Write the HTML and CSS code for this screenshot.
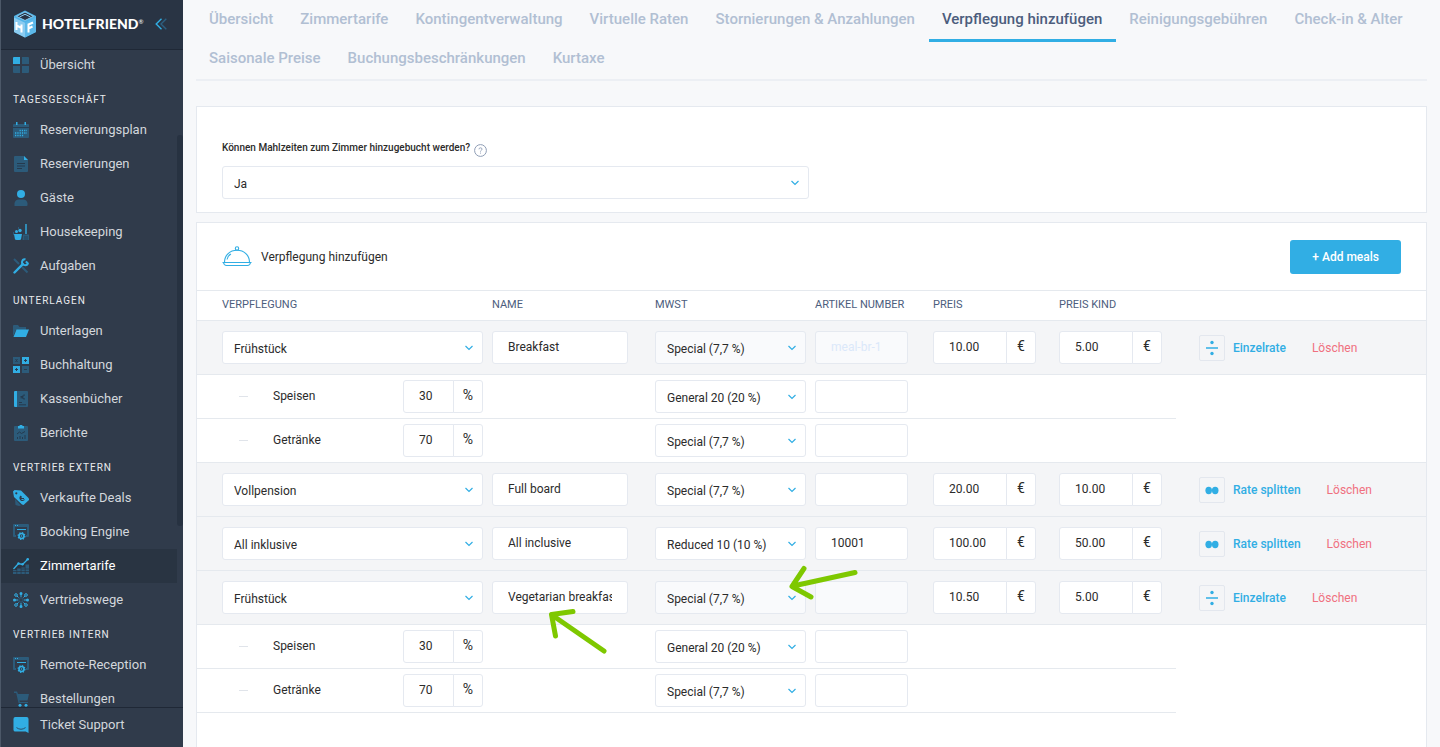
FILE: index.html
```html
<!DOCTYPE html>
<html lang="de">
<head>
<meta charset="utf-8">
<meta name="viewport" content="width=device-width, initial-scale=1">
<title>HotelFriend – Verpflegung hinzufügen</title>
<link rel="stylesheet" href="styles.css">
</head>
<body>
<svg class="sprite" aria-hidden="true">
  <symbol id="chevron" viewBox="0 0 10 6"><path d="M1.5 1l3.5 3.5L8.500 1" fill="none" stroke="currentColor" stroke-width="1.200"/></symbol>
  <symbol id="divide" viewBox="0 0 14 16"><path d="M1 8h12" stroke="currentColor" stroke-width="1.500"/><circle cx="7" cy="2.500" r="1.700" fill="currentColor"/><circle cx="7" cy="13.500" r="1.700" fill="currentColor"/></symbol>
  <symbol id="merge" viewBox="0 0 14 16"><ellipse cx="3.700" cy="8.500" rx="3.300" ry="3.700" fill="currentColor"/><ellipse cx="10.200" cy="8.500" rx="3.300" ry="3.700" fill="currentColor"/></symbol>
  <symbol id="browser" viewBox="0 0 16 16">
    <path class="dim" d="M0 1a1 1 0 0 1 1-1h14a1 1 0 0 1 1 1v11a1 1 0 0 1-1 1h-2v-2h1V3H2v8h1v2H1a1 1 0 0 1-1-1z"/>
    <path class="lit" d="M2 1h1v1H2zM4 1h1v1H4zM4 5h9v1H4z"/>
    <circle cx="8.500" cy="12" r="2.500" fill="none" stroke="#31aee4" stroke-width="1.600"/><circle cx="8.500" cy="12" r="3.400" fill="none" stroke="#31aee4" stroke-width="1.200" stroke-dasharray="1.300 1.370"/><circle class="lit" cx="8.500" cy="12" r=".8"/>
  </symbol>
</svg>

<div class="app">
  <aside class="sidebar">
    <header class="brand">
      <svg class="brand-cube" width="24" height="28" viewBox="0 0 24 28" aria-hidden="true">
        <path fill="#4fb3e8" d="M12 .5L23 6v16l-11 5.500L1 22V6z"/>
        <path fill="#8acbf0" d="M1 7.500l11 5.200v14.800L1 22z"/>
        <path fill="#5cb8e9" d="M23 7.500l-11 5.200v14.800L23 22z"/>
        <path fill="#293444" stroke="#8acbf0" d="M12 2l8.500 4.300L12 10.500 3.500 6.300z"/>
        <path fill="none" stroke="#8acbf0" d="M6.500 7L12 4.300 17.500 7"/>
        <path fill="none" stroke="#fff" stroke-width="2" d="M3.500 12v8M8.500 14.500v8M3.500 15.500l5 2.500M15.500 22.500v-8l4.500-2M15.500 18.500l4-2"/>
      </svg>
      <span class="brand-name">HOTELFRIEND<sup>®</sup></span>
      <button class="collapse" type="button" aria-label="Menü einklappen">
        <svg width="12" height="12" viewBox="0 0 12 12" fill="none" stroke-width="1.400"><path stroke="#31aee4" d="M6.500 .8L1.200 6l5.300 5.200"/><path stroke="#2c5f80" d="M11.300 .8L6 6l5.300 5.200"/></svg>
      </button>
    </header>

    <nav class="menu" aria-label="Hauptmenü">
      <ul>
        <li><a href="#"><svg class="ico" viewBox="0 0 16 16"><path class="lit" d="M0 1a1 1 0 0 1 1-1h6v7H0z"/><path class="dim" d="M9 0h6a1 1 0 0 1 1 1v6H9zM0 9h7v7H1a1 1 0 0 1-1-1zM9 9h7v6a1 1 0 0 1-1 1H9z"/></svg>Übersicht</a></li>
      </ul>
      <h2>TAGESGESCHÄFT</h2>
      <ul>
        <li><a href="#"><svg class="ico" viewBox="0 0 16 16"><path class="dim" d="M1 2h14a1 1 0 0 1 1 1v12a1 1 0 0 1-1 1H1a1 1 0 0 1-1-1V3a1 1 0 0 1 1-1z"/><path stroke="#293d52" d="M0 5.500h16"/><path class="lit" d="M3 0h1.500v3H3zM11.500 0H13v3h-1.500z"/><path stroke="#31aee4" stroke-width="1.300" stroke-dasharray="1.300 1" d="M6.500 8.500H14M2 11h12M2 13.500h9"/></svg>Reservierungsplan</a></li>
        <li><a href="#"><svg class="ico" viewBox="0 0 16 16"><path class="dim" d="M2 0h9l4 4v11a1 1 0 0 1-1 1H2a1 1 0 0 1-1-1V1a1 1 0 0 1 1-1z"/><path class="lit" d="M11 0v4h4z"/><path stroke="#253a4e" d="M4 7.500h8M4 10h8M4 12.500h5"/></svg>Reservierungen</a></li>
        <li><a href="#"><svg class="ico" viewBox="0 0 16 16"><circle class="lit" cx="8" cy="4" r="4"/><path class="dim" d="M1.500 16v-2.500Q2 9.500 6 9.500h4q4 0 4.500 4V15a1 1 0 0 1-1 1z"/></svg>Gäste</a></li>
        <li><a href="#"><svg class="ico" viewBox="0 0 16 16"><path class="lit" d="M1 10h8l-1 5.500Q5 16.500 2 15.500zM12.300 0h1.400v10h-1.400z"/><circle class="lit" cx="7" cy="6.500" r="1.700"/><circle class="lit" cx="3.500" cy="7.500" r="1.500"/><path class="dim" d="M10 10.500h6V16H9.500zM0 8h1v3H0zM5 3h1v2H5z"/><path stroke="#253a4e" stroke-width=".7" d="M12 12v4M14 12v4"/></svg>Housekeeping</a></li>
        <li><a href="#"><svg class="ico" viewBox="0 0 16 16"><path fill="none" stroke="#2c5b7a" stroke-width="2" d="M1 1l5 5M9 9l5.500 5.500"/><path fill="none" stroke="#31aee4" stroke-width="2.400" stroke-linecap="round" d="M1.500 14.500l8.300-8.300"/><path fill="none" stroke="#31aee4" stroke-width="2" d="M12.500 1.200a3 3 0 1 0 2.500 3.500M12.800 3.400L15 5.200"/></svg>Aufgaben</a></li>
      </ul>
      <h2>UNTERLAGEN</h2>
      <ul>
        <li><a href="#"><svg class="ico" viewBox="0 0 16 16"><path class="dim" d="M0 3a1 1 0 0 1 1-1h4l1.500 2H13v3H3L0 13z"/><path class="lit" d="M3.500 6.500H16L13 14H.5z"/></svg>Unterlagen</a></li>
        <li><a href="#"><svg class="ico" viewBox="0 0 16 16"><path class="dim" d="M0 0h7v7H0zM9 9h7v7H9z"/><path class="lit" d="M9 0h7v7H9zM0 9h7v7H0z"/><path stroke="#293d52" d="M2.500 2l2 3M4.500 2l-2 3M11 3.500h3M12.500 2v3M2 12.500h3M3.500 11v3M11 12.500h3"/></svg>Buchhaltung</a></li>
        <li><a href="#"><svg class="ico" viewBox="0 0 16 16"><path class="dim" d="M4 0h10a1 1 0 0 1 1 1v14a1 1 0 0 1-1 1H4z"/><path class="lit" d="M2 0h2v16H2a1 1 0 0 1-1-1V1a1 1 0 0 1 1-1z"/><path fill="none" stroke="#253a4e" d="M12 4.200a2 2 0 1 0 0 3.600M7.500 5.500h3M7.500 6.800h3M6 11.500h3M6 13.800h7"/></svg>Kassenbücher</a></li>
        <li><a href="#"><svg class="ico" viewBox="0 0 16 16"><path class="dim" d="M2 1h12a1 1 0 0 1 1 1v13a1 1 0 0 1-1 1H2a1 1 0 0 1-1-1V2a1 1 0 0 1 1-1z"/><path class="lit" d="M5 1h1.500a1.500 1.500 0 0 1 3 0H11v2.500H5z"/><path fill="none" stroke="#253a4e" d="M4 9l2.500-2 2 1.500L12 6.500M4.500 14v-2M7 14v-3M9.500 14v-2M12 14v-4"/></svg>Berichte</a></li>
      </ul>
      <h2>VERTRIEB EXTERN</h2>
      <ul>
        <li><a href="#"><svg class="ico" viewBox="0 0 16 16"><path class="dim" d="M2 9l6 6.500-2 .5-3.500-1z"/><path class="lit" d="M0 1.500L1.500 0 8 .5l8 8v1.500L10.500 15 9 14.500 1 7z"/><circle cx="3.300" cy="3.300" r="1.100" fill="#303b4b"/><path fill="none" stroke="#303b4b" stroke-width="1.200" d="M8 6a2.500 2.500 0 1 0 3.500 3.500M8 6v2.500h3"/></svg>Verkaufte Deals</a></li>
        <li><a href="#"><svg class="ico"><use href="#browser"/></svg>Booking Engine</a></li>
        <li><a class="active" href="#" aria-current="page"><svg class="ico" viewBox="0 0 16 16"><path class="dim" d="M0 12h3.500v4H0zM4.200 10.500h3.500V16H4.200zM8.400 9.500h3.400V16H8.400zM12.500 6.500H16V16h-3.500z"/><path stroke="#293442" stroke-width=".7" d="M0 13.500h16M8.400 11h8"/><path fill="none" stroke="#31aee4" stroke-width="1.300" d="M.5 11L5.500 5.500l4 1L15 1"/><circle class="lit" cx="5.500" cy="5.500" r="1.200"/><circle class="lit" cx="9.500" cy="6.300" r="1.200"/><circle class="lit" cx="14.700" cy="1.300" r="1.300"/></svg>Zimmertarife</a></li>
        <li><a href="#"><svg class="ico" viewBox="0 0 16 16"><circle cx="8" cy="8" r="2.200" fill="none" stroke="#2c5b7a"/><path stroke="#31aee4" d="M8 1v4M8 11v4M1 8h4M11 8h4M4 4l1.500 1.500M12 4l-1.500 1.500M4 12l1.500-1.500M12 12l-1.500-1.500"/><path class="lit" d="M6.500 1.500a1.500 1.500 0 1 1 3 0a1.500 1.500 0 1 1-3 0M6.500 14.500a1.500 1.500 0 1 1 3 0a1.500 1.500 0 1 1-3 0M0 8a1.500 1.500 0 1 1 3 0a1.500 1.500 0 1 1-3 0M13 8a1.500 1.500 0 1 1 3 0a1.500 1.500 0 1 1-3 0"/><g fill="none" stroke="#31aee4"><circle cx="3" cy="3" r="1.300"/><circle cx="13" cy="3" r="1.300"/><circle cx="3" cy="13" r="1.300"/><circle cx="13" cy="13" r="1.300"/></g></svg>Vertriebswege</a></li>
      </ul>
      <h2>VERTRIEB INTERN</h2>
      <ul>
        <li><a href="#"><svg class="ico"><use href="#browser"/></svg>Remote-Reception</a></li>
        <li><a href="#"><svg class="ico" viewBox="0 0 16 16"><path class="dim" d="M1 .5h3L5 3h11l-1.500 6.500h-8l.3 1.500H15v1H5.500L3.200 2H1z"/><circle class="lit" cx="7" cy="14.300" r="1.500"/><circle class="lit" cx="13" cy="14.300" r="1.500"/></svg>Bestellungen</a></li>
      </ul>
      <span class="thumb"></span>
    </nav>

    <footer class="support">
      <a href="#"><svg class="ico" viewBox="0 0 16 17"><path class="lit" d="M2 0h12a2 2 0 0 1 2 2v15l-3-1.500H2a2 2 0 0 1-2-2V2a2 2 0 0 1 2-2z"/><path fill="none" stroke="#2b4a63" stroke-linecap="round" d="M3.500 11.500q4.500 3.300 9 0"/></svg>Ticket Support</a>
    </footer>
  </aside>

  <main class="main">
    <nav class="tabs" aria-label="Einstellungen">
      <a href="#">Übersicht</a>
      <a href="#">Zimmertarife</a>
      <a href="#">Kontingentverwaltung</a>
      <a href="#">Virtuelle Raten</a>
      <a href="#">Stornierungen &amp; Anzahlungen</a>
      <a class="current" href="#" aria-current="page">Verpflegung hinzufügen</a>
      <a href="#">Reinigungsgebühren</a>
      <a href="#">Check-in &amp; Alter</a>
      <a href="#">Saisonale Preise</a>
      <a href="#">Buchungsbeschränkungen</a>
      <a href="#">Kurtaxe</a>
    </nav>

    <section class="card question">
      <div class="question-label">
        <label for="bookable">Können Mahlzeiten zum Zimmer hinzugebucht werden?</label>
        <svg class="help" width="13" height="13" viewBox="0 0 13 13" fill="none" stroke="#8e9db5" aria-hidden="true"><circle cx="6.500" cy="6.500" r="5.900"/><path stroke-width=".9" d="M5 5.300q0-1.500 1.500-1.500T8 5.200q0 .8-.8 1.200-.7.300-.7 1.200M6.500 8.600v1"/></svg>
      </div>
      <div class="select wide"><select id="bookable"><option>Ja</option><option>Nein</option></select><svg><use href="#chevron"/></svg></div>
    </section>

    <section class="card meals">
      <header class="meals-head">
        <svg width="30" height="21" viewBox="0 0 30 21" fill="none" stroke="#31aee4" stroke-width="1.100" aria-hidden="true"><path d="M2.500 16.500C2.500 9 8 4.300 15 4.300S27.500 9 27.500 16.500M.5 16.500h29M1.500 16.500q.5 3 3 3h21q2.500 0 3-3M5 13.500q.7-4 4-5.500"/><circle cx="15" cy="2.500" r="1.700"/></svg>
        <h1>Verpflegung hinzufügen</h1>
        <button class="add" type="button">+ Add meals</button>
      </header>

      <table>
        <colgroup><col class="c-meal"><col class="c-name"><col class="c-tax"><col class="c-article"><col class="c-price"><col class="c-child"><col></colgroup>
        <thead>
          <tr><th>VERPFLEGUNG</th><th>NAME</th><th>MWST</th><th>ARTIKEL NUMBER</th><th>PREIS</th><th>PREIS KIND</th><th></th></tr>
        </thead>
        <tbody>
          <tr class="meal">
            <td><div class="select"><select aria-label="Verpflegung"><option>Frühstück</option></select><svg><use href="#chevron"/></svg></div></td>
            <td><input aria-label="Name" value="Breakfast"></td>
            <td><div class="select"><select aria-label="MwSt" disabled><option>Special (7,7 %)</option></select><svg><use href="#chevron"/></svg></div></td>
            <td><input aria-label="Artikel Number" value="meal-br-1" disabled></td>
            <td><div class="amount"><input aria-label="Preis" value="10.00"><span>€</span></div></td>
            <td><div class="amount"><input aria-label="Preis Kind" value="5.00"><span>€</span></div></td>
            <td><div class="actions"><button class="rate" type="button"><svg><use href="#divide"/></svg>Einzelrate</button><button class="delete" type="button">Löschen</button></div></td>
          </tr>
          <tr class="part">
            <td><div class="share"><i></i><label for="s1">Speisen</label><div class="amount"><input id="s1" value="30"><span>%</span></div></div></td>
            <td></td>
            <td><div class="select"><select aria-label="MwSt"><option>General 20 (20 %)</option></select><svg><use href="#chevron"/></svg></div></td>
            <td><input aria-label="Artikel Number"></td><td></td><td></td><td></td>
          </tr>
          <tr class="part">
            <td><div class="share"><i></i><label for="s2">Getränke</label><div class="amount"><input id="s2" value="70"><span>%</span></div></div></td>
            <td></td>
            <td><div class="select"><select aria-label="MwSt"><option>Special (7,7 %)</option></select><svg><use href="#chevron"/></svg></div></td>
            <td><input aria-label="Artikel Number"></td><td></td><td></td><td class="close"></td>
          </tr>
          <tr class="meal">
            <td><div class="select"><select aria-label="Verpflegung"><option>Vollpension</option></select><svg><use href="#chevron"/></svg></div></td>
            <td><input aria-label="Name" value="Full board"></td>
            <td><div class="select"><select aria-label="MwSt"><option>Special (7,7 %)</option></select><svg><use href="#chevron"/></svg></div></td>
            <td><input aria-label="Artikel Number"></td>
            <td><div class="amount"><input aria-label="Preis" value="20.00"><span>€</span></div></td>
            <td><div class="amount"><input aria-label="Preis Kind" value="10.00"><span>€</span></div></td>
            <td><div class="actions"><button class="rate" type="button"><svg><use href="#merge"/></svg>Rate splitten</button><button class="delete" type="button">Löschen</button></div></td>
          </tr>
          <tr class="meal">
            <td><div class="select"><select aria-label="Verpflegung"><option>All inklusive</option></select><svg><use href="#chevron"/></svg></div></td>
            <td><input aria-label="Name" value="All inclusive"></td>
            <td><div class="select"><select aria-label="MwSt"><option>Reduced 10 (10 %)</option></select><svg><use href="#chevron"/></svg></div></td>
            <td><input aria-label="Artikel Number" value="10001"></td>
            <td><div class="amount"><input aria-label="Preis" value="100.00"><span>€</span></div></td>
            <td><div class="amount"><input aria-label="Preis Kind" value="50.00"><span>€</span></div></td>
            <td><div class="actions"><button class="rate" type="button"><svg><use href="#merge"/></svg>Rate splitten</button><button class="delete" type="button">Löschen</button></div></td>
          </tr>
          <tr class="meal">
            <td><div class="select"><select aria-label="Verpflegung"><option>Frühstück</option></select><svg><use href="#chevron"/></svg></div></td>
            <td><input aria-label="Name" value="Vegetarian breakfast"></td>
            <td><div class="select"><select aria-label="MwSt" disabled><option>Special (7,7 %)</option></select><svg><use href="#chevron"/></svg></div></td>
            <td><input aria-label="Artikel Number" disabled></td>
            <td><div class="amount"><input aria-label="Preis" value="10.50"><span>€</span></div></td>
            <td><div class="amount"><input aria-label="Preis Kind" value="5.00"><span>€</span></div></td>
            <td><div class="actions"><button class="rate" type="button"><svg><use href="#divide"/></svg>Einzelrate</button><button class="delete" type="button">Löschen</button></div></td>
          </tr>
          <tr class="part">
            <td><div class="share"><i></i><label for="s3">Speisen</label><div class="amount"><input id="s3" value="30"><span>%</span></div></div></td>
            <td></td>
            <td><div class="select"><select aria-label="MwSt"><option>General 20 (20 %)</option></select><svg><use href="#chevron"/></svg></div></td>
            <td><input aria-label="Artikel Number"></td><td></td><td></td><td></td>
          </tr>
          <tr class="part">
            <td><div class="share"><i></i><label for="s4">Getränke</label><div class="amount"><input id="s4" value="70"><span>%</span></div></div></td>
            <td></td>
            <td><div class="select"><select aria-label="MwSt"><option>Special (7,7 %)</option></select><svg><use href="#chevron"/></svg></div></td>
            <td><input aria-label="Artikel Number"></td><td></td><td></td><td></td>
          </tr>
        </tbody>
      </table>

      <svg class="marks" width="320" height="100" viewBox="545 560 320 100" fill="none" stroke="#7ec800" stroke-width="5" stroke-linecap="round" stroke-linejoin="round" aria-hidden="true">
        <path d="M855 572.500L793 586M804 568.500L792 586.500 811 597"/>
        <path d="M604 651L552 615M573 611.500L551.500 614.500 555.500 636"/>
      </svg>
    </section>
  </main>
</div>
</body>
</html>
```

FILE: styles.css
```css
*, *::before, *::after { box-sizing: border-box; }

body {
  margin: 0;
  background: #f7f8fa;
  color: #2b2b2b;
  font: 12px/16px Roboto, "Liberation Sans", sans-serif;
}

a { color: inherit; text-decoration: none; }
ul { list-style: none; margin: 0; padding: 0; }
button { border: 0; padding: 0; background: none; font: inherit; cursor: pointer; }

.sprite { position: absolute; width: 0; height: 0; }
.lit { fill: #31aee4; }
.dim { fill: #2c5b7a; }

.app {
  display: grid;
  grid-template-columns: 183px minmax(0, 1fr);
  height: 100vh;
  overflow: hidden;
}

/* Sidebar */
.sidebar {
  display: flex;
  flex-direction: column;
  min-height: 0;
  background: #303b4b;
  border-left: 1px solid #4c5868;
  color: #d3d7dc;
}

.brand {
  display: flex;
  align-items: center;
  flex: none;
  height: 50px;
  padding: 0 16px 2px 12px;
  background: #293444;
  border-bottom: 1px solid #1f2836;
}

.brand-name {
  flex: 1;
  margin-left: 5px;
  color: #fff;
  font: 900 14px/16px Lato, sans-serif;
  white-space: nowrap;
}

.brand-name sup { font-size: 6px; font-weight: 400; line-height: 0; vertical-align: 5px; }
.collapse { display: flex; }

.menu {
  position: relative;
  flex: 1;
  min-height: 0;
  overflow: hidden;
}

.menu ul:first-child { margin-top: -2px; }

.menu h2 {
  height: 31px;
  margin: 0;
  padding: 10px 0 0 12px;
  color: #e8eaed;
  font-size: 10px;
  font-weight: 400;
  line-height: 16px;
  letter-spacing: 1px;
}

.menu a, .support a {
  display: flex;
  align-items: center;
  gap: 11px;
  height: 34px;
  margin-right: 6px;
  padding-left: 12px;
  font-size: 13px;
}

.menu a.active { background: #293442; color: #fff; }
.ico { flex: none; width: 16px; height: 16px; }

.thumb {
  position: absolute;
  top: 85px;
  right: 0;
  width: 6px;
  height: 391px;
  border-radius: 3px;
  background: #273241;
}

.support {
  flex: none;
  height: 40px;
  border-top: 1px solid #1f2836;
}

/* Tabs */
.main {
  display: flex;
  flex-direction: column;
  min-width: 0;
  padding: 0 13px;
}

.tabs {
  display: flex;
  flex-wrap: wrap;
  flex: none;
  padding-bottom: 1px;
  border-bottom: 2px solid #eceff4;
  color: #b1bfd3;
  font-size: 15px;
  font-weight: 500;
  line-height: 39px;
}

.tabs a { position: relative; padding: 0 14px 0 13px; }
.tabs .current { color: #4c5d7d; }

.tabs .current::after {
  content: "";
  position: absolute;
  right: 0;
  bottom: -3px;
  left: 0;
  height: 3px;
  background: #31aee4;
}

/* Cards */
.card {
  border: 1px solid #e5e9ef;
  background: #fff;
}

.question {
  flex: none;
  margin-top: 25px;
  padding: 34px 25px 13px;
}

.question-label {
  display: flex;
  gap: 4px;
  height: 16px;
  margin-bottom: 9px;
  font-size: 10px;
  font-weight: 500;
  line-height: 13px;
}

.help { align-self: flex-end; }

.meals {
  position: relative;
  flex: 1;
  min-height: 0;
  margin-top: 9px;
  border-bottom: 0;
}

.meals-head {
  display: flex;
  align-items: center;
  gap: 9px;
  height: 67px;
  padding: 0 25px;
}

.meals-head h1 { flex: 1; margin: 0; font-size: 12px; font-weight: 400; }

.add {
  height: 34px;
  padding: 0 22px;
  border-radius: 3px;
  background: #31aee4;
  color: #fff;
  font-weight: 500;
}

/* Form controls */
input, select, .amount span {
  height: 33px;
  border: 1px solid #e5e9f0;
  border-radius: 3px;
  background: #fff;
  color: inherit;
  font: inherit;
}

input { display: block; width: 100%; padding: 0 15px 2px; }
input:disabled, select:disabled { background: #f9fafc; opacity: 1; }
input:disabled { color: #dbe8fa; }

.select { position: relative; }
.select.wide { width: 50%; max-width: 587px; }

.select select {
  appearance: none;
  display: block;
  width: 100%;
  padding: 2px 26px 0 11px;
}

.select select:disabled { color: inherit; }

.select svg {
  position: absolute;
  top: 14px;
  right: 9px;
  width: 10px;
  height: 6px;
  color: #31aee4;
  pointer-events: none;
}

.amount { display: flex; }
.amount input { flex: 1; min-width: 0; border-radius: 3px 0 0 3px; }

.amount span {
  flex: none;
  width: 30px;
  margin-left: -1px;
  border-radius: 0 3px 3px 0;
  font-size: 14px;
  line-height: 29px;
  text-align: center;
}

/* Table */
table {
  width: 100%;
  border-collapse: separate;
  border-spacing: 0;
  table-layout: fixed;
}

.c-meal { width: 295px; }
.c-name { width: 163px; }
.c-tax { width: 160px; }
.c-article { width: 118px; }
.c-price { width: 126px; }
.c-child { width: 117px; }

th {
  height: 31px;
  padding: 0 0 2px;
  border: solid #e5e9ee;
  border-width: 1px 0;
  color: #4c5d7d;
  font-size: 11px;
  font-weight: 400;
  text-align: left;
  white-space: nowrap;
}

td { padding: 0; border-bottom: 1px solid #e5e9ee; }
.meal td { padding-top: 10px; padding-bottom: 10px; background: #f4f5f7; }
.part td { padding-top: 5px; padding-bottom: 5px; }
.part td:last-child { border-bottom-color: transparent; }
.part td.close { border-bottom-color: #e5e9ee; }

th:nth-child(1), td:nth-child(1) { padding-left: 25px; padding-right: 9px; }
td:nth-child(2) { padding-right: 27px; }
td:nth-child(3) { padding-right: 9px; }
td:nth-child(4) { padding-right: 25px; }
td:nth-child(5) { padding-right: 23px; }
td:nth-child(6) { padding-right: 14px; }
td:nth-child(7) { padding-left: 23px; }

.share { display: flex; align-items: center; padding-left: 17px; }
.share i { width: 9px; height: 1px; margin-right: 25px; background: #e0e4ea; }
.share label { flex: 1; padding-bottom: 2px; }
.share .amount { width: 80px; }

.actions { display: flex; align-items: center; gap: 26px; white-space: nowrap; }
.rate { display: flex; align-items: center; gap: 8px; color: #31aee4; font-weight: 500; }

.rate svg {
  width: 26px;
  height: 26px;
  padding: 4px 5px;
  border: 1px solid #e3e7ee;
  border-radius: 2px;
}

.delete { color: #f0707f; }

/* Annotation arrows above the table */
.marks {
  position: absolute;
  top: 337px;
  left: 348px;
  pointer-events: none;
}
```
